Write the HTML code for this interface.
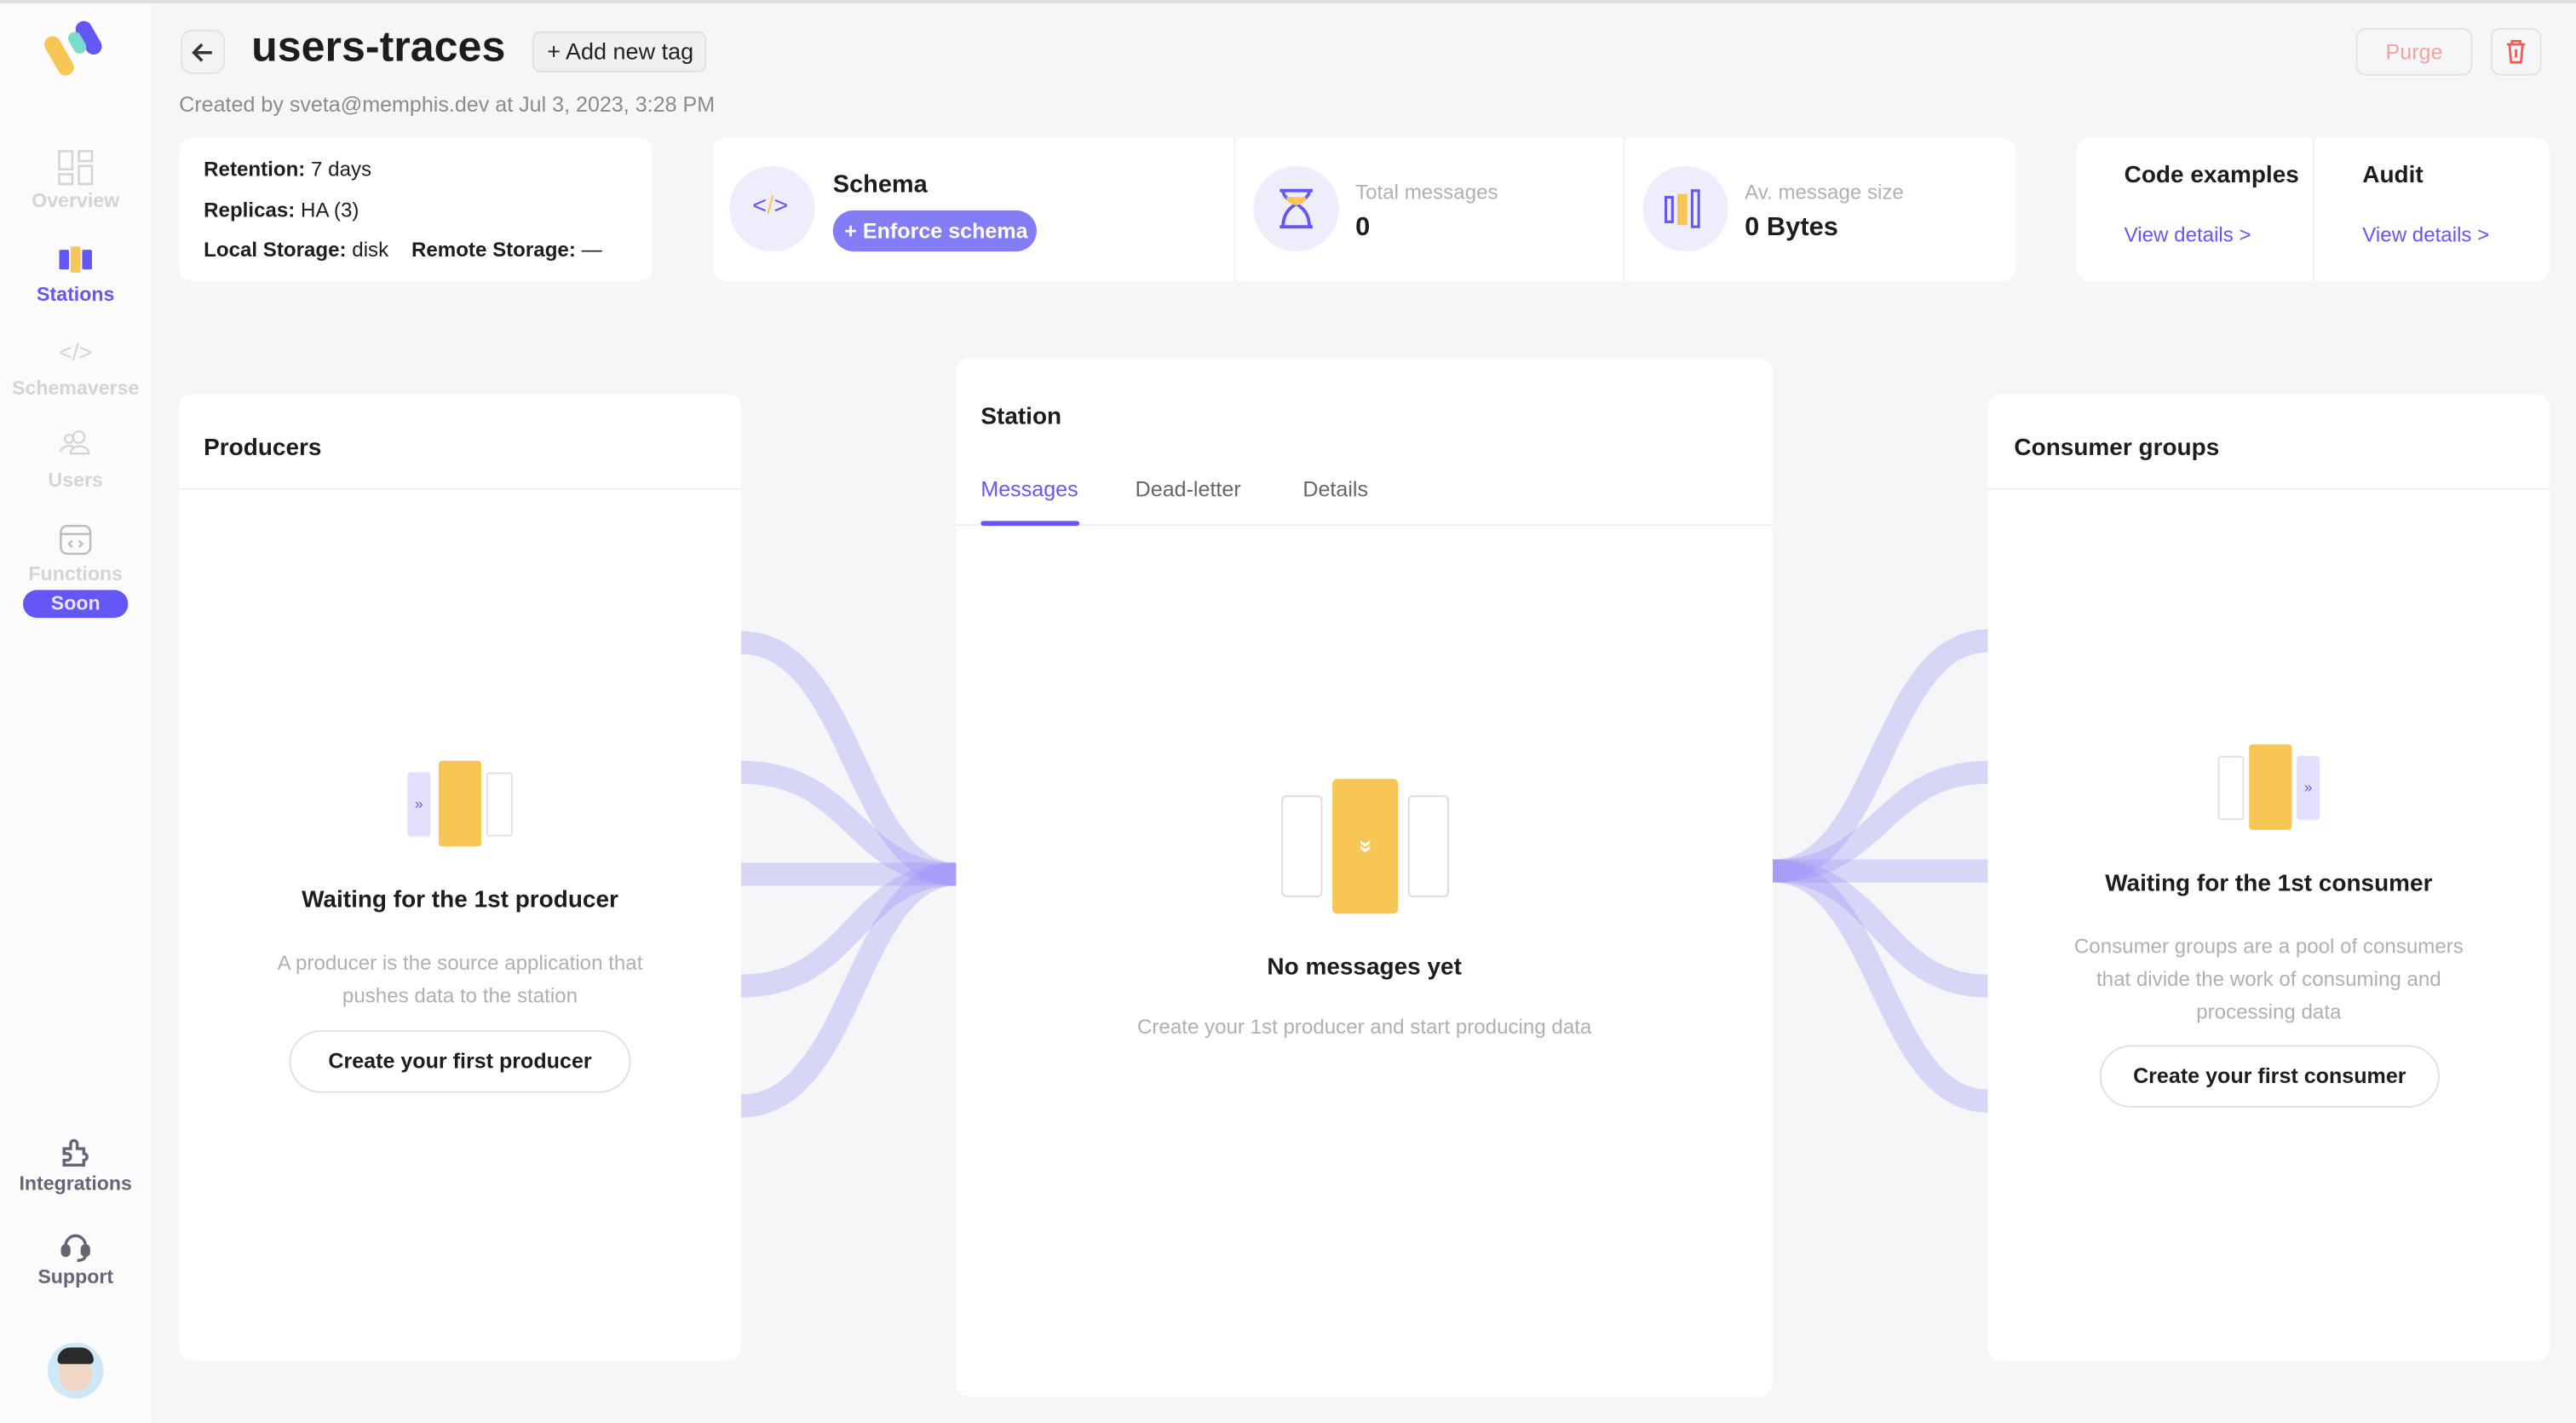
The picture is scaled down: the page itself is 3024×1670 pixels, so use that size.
<!DOCTYPE html>
<html><head><meta charset="utf-8"><style>
*{box-sizing:border-box;margin:0;padding:0}
html,body{width:3024px;height:1670px;overflow:hidden;background:#f5f6f8}
#w{position:absolute;left:0;top:0;width:1568px;height:866px;transform:scale(1.928571);transform-origin:0 0;font-family:"Liberation Sans",sans-serif;color:#1d1d1d}
.a{position:absolute}
.card{position:absolute;background:#fff;border-radius:8px}
.nav{position:absolute;left:0;width:92px;text-align:center;font-size:12px;font-weight:bold;color:#d4d4d6}
.c{text-align:center}
.btn{position:absolute;border:1px solid #e0e0e2;border-radius:22px;background:#fff;font-size:13px;font-weight:bold;text-align:center}
</style></head><body><div id="w">
<div class="a" style="left:0;top:0;width:1568px;height:2px;background:#dedfe2"></div>
<div class="a" style="left:0;top:2px;width:92px;height:864px;background:#fbfbfb"></div>
<svg class="a" style="left:22px;top:10px" width="50" height="40" viewBox="0 0 50 40"><rect x="9" y="11" width="10" height="26" rx="5" transform="rotate(-30 14 24)" fill="#f7c655"/><rect x="27" y="2" width="10" height="22" rx="5" transform="rotate(-30 32 13)" fill="#6557f6"/><rect x="21" y="9" width="8" height="14" rx="4" transform="rotate(-30 25 16)" fill="#7ddbc9"/></svg>
<svg class="a" style="left:35px;top:91px" width="22" height="22" viewBox="0 0 22 22" fill="none" stroke="#d4d4d6" stroke-width="1.3"><rect x="1" y="1" width="8" height="11"/><rect x="13" y="1" width="8" height="6"/><rect x="1" y="15" width="8" height="6"/><rect x="13" y="10" width="8" height="11"/></svg>
<div class="nav" style="top:115px">Overview</div>
<svg class="a" style="left:36px;top:150px" width="22" height="16"><rect x="0" y="2" width="6" height="12" rx="1" fill="#6557f6"/><rect x="7" y="0" width="6" height="16" rx="1" fill="#f7c655"/><rect x="14" y="2" width="6" height="12" rx="1" fill="#6557f6"/></svg>
<div class="nav" style="top:172px;color:#6557f6">Stations</div>
<div class="nav" style="top:206px;font-size:14px;font-weight:normal">&lt;/&gt;</div>
<div class="nav" style="top:229px">Schemaverse</div>
<svg class="a" style="left:36px;top:261px" width="22" height="16" fill="none" stroke="#d4d4d6" stroke-width="1.2"><circle cx="6" cy="6" r="2.5"/><circle cx="12" cy="5" r="3.5"/><path d="M1 14c0-4 8-5 8-2M7 15c0-6 11-6 11 0z"/></svg>
<div class="nav" style="top:285px">Users</div>
<svg class="a" style="left:36px;top:319px" width="20" height="19" fill="none" stroke="#bdbdbf" stroke-width="1.3"><rect x="1" y="1" width="18" height="17" rx="4"/><path d="M1 6h18M8 10l-2 2 2 2M12 10l2 2-2 2"/></svg>
<div class="nav" style="top:342px">Functions</div>
<div class="a c" style="left:14px;top:359px;width:64px;height:17px;border-radius:9px;background:#6557f6;color:#e6e6e6;font-size:12px;font-weight:bold;line-height:17px">Soon</div>
<svg class="a" style="left:36px;top:692px" width="20" height="18" fill="none" stroke="#656575" stroke-width="1.8"><path d="M3 7h4V4a2 2 0 014 0v3h4v3a2 2 0 010 4v3H3v-3h2a2 2 0 000-4H3z"/></svg>
<div class="nav" style="top:713px;color:#656575">Integrations</div>
<svg class="a" style="left:37px;top:750px" width="18" height="18" fill="none" stroke="#656575" stroke-width="1.8"><path d="M3 10V8a6 6 0 0112 0v2"/><rect x="1" y="8" width="4" height="6" rx="2" fill="#656575"/><rect x="13" y="8" width="4" height="6" rx="2" fill="#656575"/><path d="M15 14c0 2-2 3-5 3"/></svg>
<div class="nav" style="top:770px;color:#656575">Support</div>
<div class="a" style="left:29px;top:817px;width:34px;height:34px;border-radius:50%;background:#cfe8f8"></div>
<div class="a" style="left:36px;top:822px;width:20px;height:25px;border-radius:10px;background:#f0d6c4"></div>
<div class="a" style="left:35px;top:820px;width:22px;height:10px;border-radius:10px 10px 3px 3px;background:#2a2a2a"></div>

<div class="a" style="left:110px;top:18px;width:27px;height:27px;border:1.5px solid #e2e2e4;border-radius:7px;background:#f3f3f5"></div>
<svg class="a" style="left:115px;top:24px" width="16" height="16" fill="none" stroke="#333" stroke-width="1.8"><path d="M14 8H3M8 3L3 8l5 5"/></svg>
<div class="a" style="left:153px;top:13px;font-size:26px;font-weight:bold;color:#1d1d1d">users-traces</div>
<div class="a" style="left:324px;top:19px;width:106px;height:25px;border:1px solid #e0e0e2;border-radius:5px;background:#eff0f2;font-size:14px;line-height:23px;padding-left:8px;color:#222">+ Add new tag</div>
<div class="a" style="left:109px;top:56px;font-size:13px;color:#8b8b8b">Created by sveta@memphis.dev at Jul 3, 2023, 3:28 PM</div>
<div class="a c" style="left:1434px;top:17px;width:71px;height:29px;border:1px solid #e2e2e4;border-radius:6px;font-size:13px;line-height:27px;color:#f4a2a0">Purge</div>
<div class="a" style="left:1516px;top:17px;width:31px;height:29px;border:1px solid #e2e2e4;border-radius:6px"></div>
<svg class="a" style="left:1525px;top:23px" width="13" height="16" fill="none" stroke="#ed5a57" stroke-width="1.4"><path d="M1 4h11M4 4V2h5v2M2.5 4l1 11h6l1-11M6.5 7v5"/></svg>

<div class="card" style="left:109px;top:84px;width:288px;height:87px;font-size:12.5px;line-height:24.5px;padding:7px 15px">
<b>Retention:</b> 7 days<br><b>Replicas:</b> HA (3)<br><b>Local Storage:</b> disk &nbsp;&nbsp;&nbsp;<b>Remote Storage:</b> —</div>
<div class="card" style="left:434px;top:84px;width:793px;height:87px"></div>
<div class="a" style="left:751px;top:84px;width:1px;height:87px;background:#f0f0f2"></div>
<div class="a" style="left:988px;top:84px;width:1px;height:87px;background:#f0f0f2"></div>
<div class="a" style="left:444px;top:101px;width:52px;height:52px;border-radius:50%;background:#eeedfc"></div>
<div class="a" style="left:458px;top:117px;font-size:15px;color:#6557f6">&lt;<span style="color:#f7c655">/</span>&gt;</div>
<div class="a" style="left:507px;top:104px;font-size:15px;font-weight:bold">Schema</div>
<div class="a" style="left:507px;top:128px;width:124px;height:25px;border-radius:13px;background:#857cf7;color:#fff;font-size:13px;font-weight:bold;line-height:25px;padding-left:7px">+ Enforce schema</div>
<div class="a" style="left:763px;top:101px;width:52px;height:52px;border-radius:50%;background:#eeedfc"></div>
<svg class="a" style="left:777px;top:114px" width="24" height="26" fill="none" stroke="#6557f6" stroke-width="2"><path d="M2 2h20M2 24h20M4 2c0 8 16 6 16 22M20 2c0 8-16 6-16 22"/><path d="M6 6h12c0 4-6 5-6 5s-6-1-6-5z" fill="#f7c655" stroke="none"/></svg>
<div class="a" style="left:825px;top:110px;font-size:12.5px;color:#b0b0b0">Total messages</div>
<div class="a" style="left:825px;top:130px;font-size:16px;font-weight:bold">0</div>
<div class="a" style="left:1000px;top:101px;width:52px;height:52px;border-radius:50%;background:#eeedfc"></div>
<svg class="a" style="left:1012px;top:114px" width="28" height="26"><rect x="2" y="6" width="4" height="15" fill="none" stroke="#6557f6" stroke-width="1.6"/><rect x="9" y="4" width="6" height="19" fill="#f7c655"/><rect x="18" y="2" width="4" height="22" fill="none" stroke="#6557f6" stroke-width="1.6"/></svg>
<div class="a" style="left:1062px;top:110px;font-size:12.5px;color:#b0b0b0">Av. message size</div>
<div class="a" style="left:1062px;top:130px;font-size:16px;font-weight:bold">0 Bytes</div>
<div class="card" style="left:1264px;top:84px;width:288px;height:87px"></div>
<div class="a" style="left:1408px;top:84px;width:1px;height:87px;background:#f0f0f2"></div>
<div class="a" style="left:1293px;top:99px;font-size:14.5px;font-weight:bold">Code examples</div>
<div class="a" style="left:1438px;top:99px;font-size:14.5px;font-weight:bold">Audit</div>
<div class="a" style="left:1293px;top:136px;font-size:12.5px;color:#6557f6">View details &gt;</div>
<div class="a" style="left:1438px;top:136px;font-size:12.5px;color:#6557f6">View details &gt;</div>

<svg class="a" style="left:0;top:0" width="1568" height="866" fill="none" stroke="rgba(150,140,245,0.3)" stroke-width="14">
<path d="M451 391C520 391 520 532 582 532"/><path d="M451 470C520 470 520 532 582 532"/><path d="M451 532L582 532"/><path d="M451 600C520 600 520 532 582 532"/><path d="M451 673C520 673 520 532 582 532"/>
<path d="M1079 530C1145 530 1145 390 1210 390"/><path d="M1079 530C1145 530 1145 470 1210 470"/><path d="M1079 530L1210 530"/><path d="M1079 530C1145 530 1145 600 1210 600"/><path d="M1079 530C1145 530 1145 670 1210 670"/>
</svg>

<div class="card" style="left:109px;top:240px;width:342px;height:588px"></div>
<div class="a" style="left:109px;top:297px;width:342px;height:1px;background:#ececee"></div>
<div class="a" style="left:124px;top:265px;font-size:14.5px;font-weight:bold">Producers</div>
<div class="a" style="left:248px;top:470px;width:14px;height:39px;background:#e2e0fc;border-radius:2px;color:#6557f6;font-size:9px;line-height:39px;text-align:center">»</div>
<div class="a" style="left:267px;top:463px;width:26px;height:52px;background:#f7c655;border-radius:2px"></div>
<div class="a" style="left:296px;top:470px;width:16px;height:39px;border:1.5px solid #e0e0e0;border-radius:2px"></div>
<div class="a c" style="left:109px;top:540px;width:342px;font-size:14.5px;font-weight:bold">Waiting for the 1st producer</div>
<div class="a c" style="left:109px;top:576px;width:342px;font-size:12.5px;line-height:20px;color:#b0b0b0">A producer is the source application that<br>pushes data to the station</div>
<div class="btn" style="left:176px;top:627px;width:208px;height:38px;line-height:36px">Create your first producer</div>

<div class="card" style="left:582px;top:218px;width:497px;height:632px"></div>
<div class="a" style="left:582px;top:319px;width:497px;height:1px;background:#ececee"></div>
<div class="a" style="left:597px;top:246px;font-size:14.5px;font-weight:bold">Station</div>
<div class="a" style="left:597px;top:290px;font-size:13px;color:#6557f6">Messages</div>
<div class="a" style="left:597px;top:317px;width:60px;height:3px;background:#6557f6;border-radius:2px"></div>
<div class="a" style="left:691px;top:290px;font-size:13px;color:#666">Dead-letter</div>
<div class="a" style="left:793px;top:290px;font-size:13px;color:#666">Details</div>
<div class="a" style="left:780px;top:484px;width:25px;height:62px;border:1.5px solid #dcdcdc;border-radius:3px"></div>
<div class="a" style="left:811px;top:474px;width:40px;height:82px;background:#f7c655;border-radius:3px"></div>
<div class="a" style="left:823px;top:507px;width:16px;height:16px;color:#fff;font-size:15px;font-weight:bold;text-align:center;line-height:16px;transform:rotate(90deg)">»</div>
<div class="a" style="left:857px;top:484px;width:25px;height:62px;border:1.5px solid #dcdcdc;border-radius:3px"></div>
<div class="a c" style="left:582px;top:581px;width:497px;font-size:14.5px;font-weight:bold">No messages yet</div>
<div class="a c" style="left:582px;top:618px;width:497px;font-size:12.5px;color:#b0b0b0">Create your 1st producer and start producing data</div>

<div class="card" style="left:1210px;top:240px;width:342px;height:588px"></div>
<div class="a" style="left:1210px;top:297px;width:342px;height:1px;background:#ececee"></div>
<div class="a" style="left:1226px;top:265px;font-size:14.5px;font-weight:bold">Consumer groups</div>
<div class="a" style="left:1350px;top:460px;width:16px;height:39px;border:1.5px solid #e0e0e0;border-radius:2px"></div>
<div class="a" style="left:1369px;top:453px;width:26px;height:52px;background:#f7c655;border-radius:2px"></div>
<div class="a" style="left:1398px;top:460px;width:14px;height:39px;background:#e2e0fc;border-radius:2px;color:#6557f6;font-size:9px;line-height:39px;text-align:center">»</div>
<div class="a c" style="left:1210px;top:530px;width:342px;font-size:14.5px;font-weight:bold">Waiting for the 1st consumer</div>
<div class="a c" style="left:1210px;top:566px;width:342px;font-size:12.5px;line-height:20px;color:#b0b0b0">Consumer groups are a pool of consumers<br>that divide the work of consuming and<br>processing data</div>
<div class="btn" style="left:1278px;top:636px;width:207px;height:38px;line-height:36px">Create your first consumer</div>
</div></body></html>
